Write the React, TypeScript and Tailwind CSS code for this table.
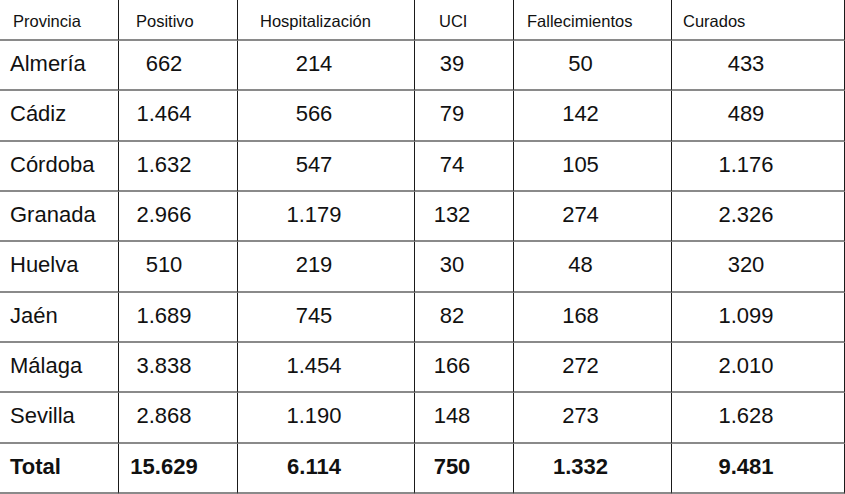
import React from "react";

const headers = [
  { t: "Provincia", pl: "pl-[13px]" },
  { t: "Positivo", pl: "pl-[17px]" },
  { t: "Hospitalización", pl: "pl-[22px]" },
  { t: "UCI", pl: "pl-[24px]" },
  { t: "Fallecimientos", pl: "pl-[13px]" },
  { t: "Curados", pl: "pl-[11px]" },
];

const rows: string[][] = [
  ["Almería", "662", "214", "39", "50", "433"],
  ["Cádiz", "1.464", "566", "79", "142", "489"],
  ["Córdoba", "1.632", "547", "74", "105", "1.176"],
  ["Granada", "2.966", "1.179", "132", "274", "2.326"],
  ["Huelva", "510", "219", "30", "48", "320"],
  ["Jaén", "1.689", "745", "82", "168", "1.099"],
  ["Málaga", "3.838", "1.454", "166", "272", "2.010"],
  ["Sevilla", "2.868", "1.190", "148", "273", "1.628"],
  ["Total", "15.629", "6.114", "750", "1.332", "9.481"],
];

const padR = ["", "pr-[28px]", "pr-[24px]", "pr-[24px]", "pr-[24px]", "pr-[24px]"];

export default function App() {
  return (
    <div
      className="w-[845px] h-[494px] bg-white text-[#111] overflow-hidden"
      style={{ fontFamily: '"Liberation Sans", Arial, sans-serif' }}
    >
      <div className="grid h-[494px] grid-cols-[119px_119px_177px_99px_158px_173px] grid-rows-[41px_repeat(9,1fr)]">
        {headers.map((h, i) => (
          <div
            key={"h" + i}
            className={`flex items-center pt-[3px] border-r border-r-[#1a1a1a] border-b-2 border-b-[#8a8a8a] text-[16.5px] ${h.pl}`}
          >
            {h.t}
          </div>
        ))}
        {rows.map((r, ri) =>
          r.map((c, ci) => (
            <div
              key={ri + "-" + ci}
              className={`flex items-center pb-[3px] border-r border-r-[#1a1a1a] border-b-2 border-b-[#8a8a8a] text-[22px] ${
                ci === 0 ? "pl-[10px]" : "justify-center " + padR[ci]
              } ${ri === rows.length - 1 ? "font-bold" : ""}`}
            >
              {c}
            </div>
          ))
        )}
      </div>
    </div>
  );
}
